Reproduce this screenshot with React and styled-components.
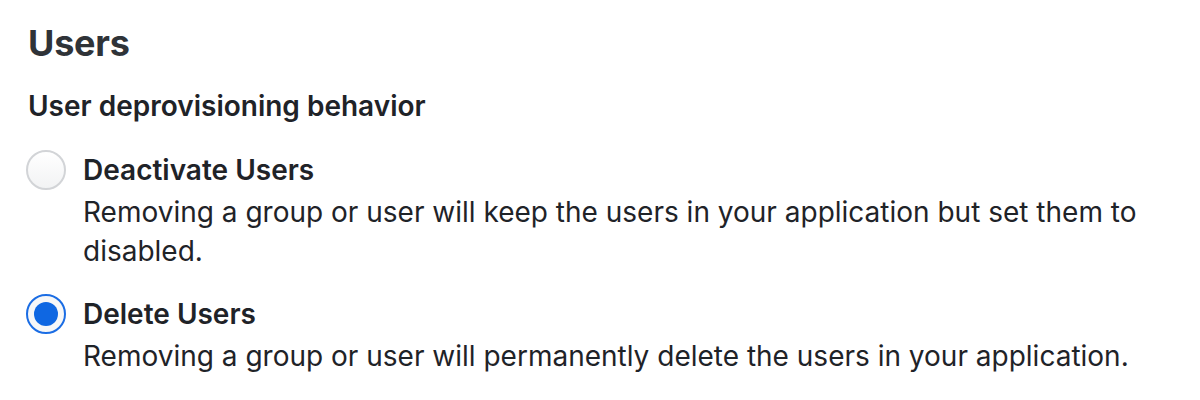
import React, { useState } from "react";
import styled, { createGlobalStyle } from "styled-components";

const Global = createGlobalStyle`
  html, body { margin: 0; padding: 0; background: #ffffff; }
  body { font-family: Inter, "Noto Sans", "Liberation Sans", sans-serif; -webkit-font-smoothing: antialiased; }
`;

const Page = styled.div`
  padding: 21px 28px 0 28px;
  color: #1f2328;
`;

const Heading = styled.h2`
  margin: 0;
  font-size: 36px;
  line-height: 45px;
  font-weight: 700;
  color: #2f3338;
  letter-spacing: -0.2px;
`;

const Fieldset = styled.fieldset`
  margin: 21px 0 0 0;
  padding: 0;
  border: 0;
  display: flex;
  flex-direction: column;
`;

const Legend = styled.legend`
  padding: 0;
  font-size: 28px;
  line-height: 39px;
  font-weight: 600;
  color: #1f2328;
  margin-bottom: 25px;
`;

const Options = styled.div`
  display: flex;
  flex-direction: column;
  gap: 24px;
`;

const Option = styled.label`
  display: grid;
  grid-template-columns: 40px 1fr;
  column-gap: 17px;
  align-items: start;
  cursor: pointer;
  margin-left: -2px;
`;

const HiddenInput = styled.input`
  position: absolute;
  opacity: 0;
  width: 0;
  height: 0;
  margin: 0;
`;

const Radio = styled.span`
  box-sizing: border-box;
  width: 40px;
  height: 40px;
  border-radius: 50%;
  margin-top: -1px;
  display: flex;
  align-items: center;
  justify-content: center;
  border: 2px solid ${(p) => (p.$checked ? "#1b6de4" : "#d2d4d7")};
  background: ${(p) =>
    p.$checked ? "#f6f7f8" : "linear-gradient(180deg, #ffffff 0%, #f2f3f4 100%)"};
  &::after {
    content: "";
    display: ${(p) => (p.$checked ? "block" : "none")};
    width: 24px;
    height: 24px;
    border-radius: 50%;
    background: #0f67e2;
  }
`;

const Text = styled.div`
  display: flex;
  flex-direction: column;
  padding-right: 20px;
`;

const Title = styled.span`
  font-size: 28px;
  line-height: 39px;
  font-weight: 600;
  color: #1f2328;
  margin-bottom: 3px;
`;

const Description = styled.span`
  font-size: 28px;
  line-height: 39px;
  font-weight: 400;
  color: #1f2328;
`;

const options = [
  {
    value: "deactivate",
    title: "Deactivate Users",
    description:
      "Removing a group or user will keep the users in your application but set them to disabled.",
  },
  {
    value: "delete",
    title: "Delete Users",
    description:
      "Removing a group or user will permanently delete the users in your application.",
  },
];

export default function App() {
  const [value, setValue] = useState("delete");
  return (
    <Page>
      <Global />
      <Heading>Users</Heading>
      <Fieldset>
        <Legend>User deprovisioning behavior</Legend>
        <Options>
          {options.map((o) => (
            <Option key={o.value}>
              <HiddenInput
                type="radio"
                name="deprovision"
                value={o.value}
                checked={value === o.value}
                onChange={() => setValue(o.value)}
              />
              <Radio $checked={value === o.value} />
              <Text>
                <Title>{o.title}</Title>
                <Description>{o.description}</Description>
              </Text>
            </Option>
          ))}
        </Options>
      </Fieldset>
    </Page>
  );
}
